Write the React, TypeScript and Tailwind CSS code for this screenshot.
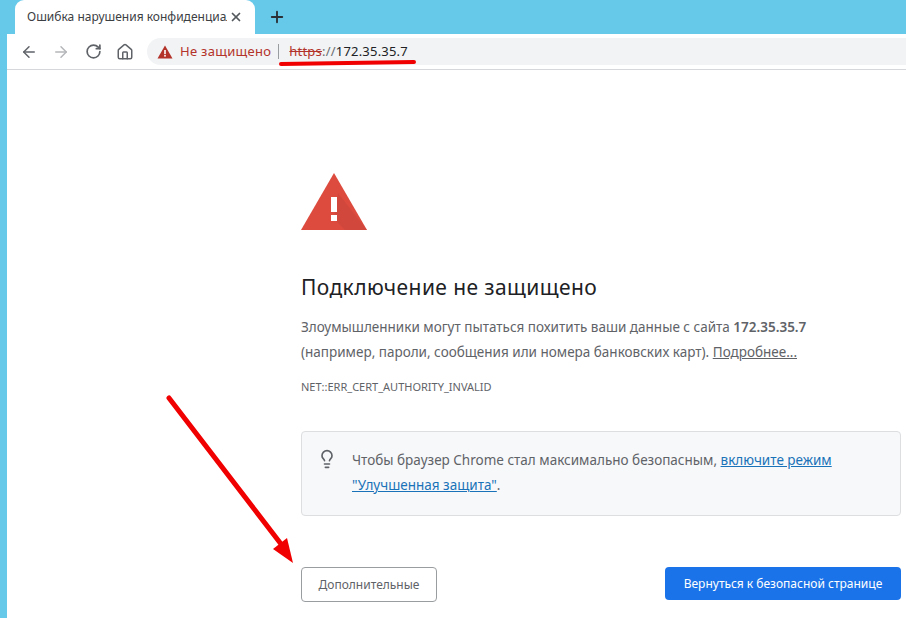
import { ArrowLeft, ArrowRight, RotateCw, Home, Plus, X, Lightbulb } from 'lucide-react';

const font = { fontFamily: '"Noto Sans", "Open Sans", sans-serif' };

export default function App() {
  return (
    <div className="relative w-[906px] h-[618px] overflow-hidden bg-white flex flex-col" style={font}>
      {/* tab strip */}
      <div className="h-[34px] bg-[#66c9ea] flex items-end pl-[15px] shrink-0">
        <div className="w-[240px] h-[34px] bg-white rounded-t-[9px] flex items-center pl-[12px] pr-[12px]">
          <span className="w-[200px] overflow-hidden whitespace-nowrap text-[12px] text-[#3c4043]">
            Ошибка нарушения конфиденциальности
          </span>
          <X className="w-[14px] h-[14px] ml-auto text-[#55595e]" strokeWidth={3} />
        </div>
        <Plus className="w-[18px] h-[18px] ml-[13px] mb-[8px] text-[#2a3036]" strokeWidth={2.5} />
      </div>

      <div className="flex flex-1 min-h-0">
        <div className="w-[7px] bg-[#66c9ea] shrink-0" />
        <div className="flex-1 min-w-0 flex flex-col">
          {/* toolbar */}
          <div className="h-[36px] border-b border-[#d5d7da] flex items-center shrink-0 pl-[13px]">
            <ArrowLeft className="w-[18px] h-[18px] text-[#5f6368]" strokeWidth={2} />
            <ArrowRight className="w-[18px] h-[18px] ml-[14px] text-[#b4b6b9]" strokeWidth={2} />
            <RotateCw className="w-[17px] h-[17px] ml-[15px] text-[#5f6368]" strokeWidth={2.4} />
            <Home className="w-[18px] h-[18px] ml-[14px] text-[#5f6368]" strokeWidth={2} />
            <div className="ml-[13px] flex-1 h-[27px] rounded-l-full bg-[#f1f3f4] flex items-center pl-[10px]">
              <svg viewBox="0 0 16 14" className="w-[16px] h-[14px]">
                <path d="M8 0.5 L15.5 13.5 H0.5 Z" fill="#b3322a" />
                <rect x="7.2" y="5" width="1.6" height="4.2" fill="#fff" />
                <rect x="7.2" y="10" width="1.6" height="1.6" fill="#fff" />
              </svg>
              <span className="ml-[7px] text-[13px] tracking-[0.3px] text-[#b3322a]">Не защищено</span>
              <div className="ml-[7px] w-px h-[15px] bg-[#9a9da0]" />
              <span className="ml-[10px] text-[13px] tracking-[0.2px] text-[#202124]">
                <span className="line-through text-[#b3322a]">https</span>
                <span className="text-[#6b6e72]">://</span>172.35.35.7
              </span>
            </div>
          </div>

          {/* interstitial */}
          <div className="flex-1 pl-[294px] pr-[5px] pt-[103px]">
            <svg viewBox="0 0 66 57" className="w-[66px] h-[57px] block">
              <path d="M33 0 L66 57 H0 Z" fill="#dd4b3e" />
              <path d="M37 20 L66 57 H44 L33 46 Z" fill="#c8443a" opacity="0.5" />
              <rect x="30" y="24" width="6" height="15" fill="#fff" />
              <rect x="30" y="42" width="6" height="6" fill="#fff" />
            </svg>
            <h1 className="mt-[42px] text-[21px] leading-[30px] font-normal tracking-[0.4px] text-[#202124]">
              Подключение не защищено
            </h1>
            <p className="mt-[13px] text-[13.5px] leading-[25px] text-[#5f6368] whitespace-nowrap">
              Злоумышленники могут пытаться похитить ваши данные с сайта{' '}
              <b className="font-semibold">172.35.35.7</b>
              <br />
              (например, пароли, сообщения или номера банковских карт).{' '}
              <span className="underline">Подробнее...</span>
            </p>
            <p className="mt-[14px] text-[11px] leading-[16px] text-[#5f6368]">NET::ERR_CERT_AUTHORITY_INVALID</p>

            <div className="mt-[36px] h-[85px] bg-[#f7f8fa] border border-[#dcdee0] rounded-[4px] flex pl-[15px] pt-[17px]">
              <Lightbulb className="w-[20px] h-[20px] text-[#5f6368] shrink-0" strokeWidth={2} />
              <p className="ml-[15px] text-[13.5px] leading-[25px] text-[#5f6368] whitespace-nowrap -mt-[1px]">
                Чтобы браузер Chrome стал максимально безопасным,{' '}
                <span className="underline text-[#1a73b8]">включите режим</span>
                <br />
                <span className="underline text-[#1a73b8]">"Улучшенная защита"</span>.
              </p>
            </div>

            <div className="mt-[51px] flex justify-between">
              <button className="w-[136px] h-[35px] bg-white border border-[#9a9da0] rounded-[4px] text-[12px] text-[#5f6368]">
                Дополнительные
              </button>
              <button className="w-[236px] h-[33px] bg-[#1a73e8] rounded-[4px] text-[12px] text-white">
                Вернуться к безопасной странице
              </button>
            </div>
          </div>
        </div>
      </div>

      {/* red marker annotations */}
      <svg viewBox="0 0 906 618" className="absolute inset-0 w-[906px] h-[618px] pointer-events-none">
        <path d="M281 64 Q340 63 414 62" stroke="#f00000" strokeWidth="4" strokeLinecap="round" fill="none" />
        <path d="M169 398 L281 544" stroke="#f00000" strokeWidth="5" strokeLinecap="round" fill="none" />
        <path d="M293 563 L273 549 L287 538 Z" fill="#f00000" />
      </svg>
    </div>
  );
}
